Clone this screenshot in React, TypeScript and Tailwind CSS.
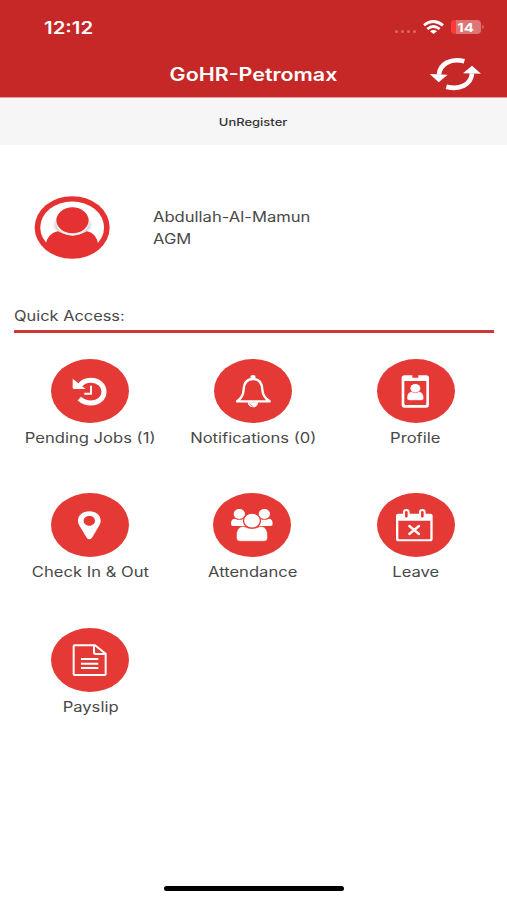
import type { ReactNode } from 'react';

interface Shortcut {
  label: string;
  viewBox: string;
  cx: number;
  cy: number;
  icon: ReactNode;
}

const shortcuts: Shortcut[] = [
  {
    label: 'Pending Jobs (1)',
    viewBox: '65 26 234 192',
    cx: 182,
    cy: 122,
    icon: (
      <>
        <path d="M151 106C160 93 173 90 185 90c23 0 39 15 39 34s-16 34-39 34c-14 0-26-5-35-13" fill="none" stroke="#fff" strokeWidth="15" />
        <path d="M130 85l39 31h-35q-4 0-4-4z" fill="#fff" />
        <path d="M185 106v24h-20" fill="none" stroke="#fff" strokeWidth="6" />
      </>
    ),
  },
  {
    label: 'Notifications (0)',
    viewBox: '42 26 234 192',
    cx: 159,
    cy: 122,
    icon: (
      <>
        <path d="M111 153c14-9 19-18 20-35 1-21 11-32 28-32s27 11 28 32c1 17 7 26 22 35z" fill="none" stroke="#fff" strokeWidth="7" strokeLinejoin="round" />
        <ellipse cx="159" cy="80" rx="8" ry="6" fill="#fff" />
        <path d="M143 156h32c-2 20-30 20-32 0z" fill="#fff" />
        <path d="M149 160c2 5 6 7 10 8" fill="none" stroke="#e53935" strokeWidth="2" />
      </>
    ),
  },
  {
    label: 'Profile',
    viewBox: '51 26 234 192',
    cx: 168,
    cy: 122,
    icon: (
      <>
        <path fillRule="evenodd" fill="#fff" d="M134 75h23v7h18v-7h23q9 0 9 8v80q0 9-9 9h-64q-9 0-9-9V83q0-8 9-8zM133 92v68q0 4 4 4h58q4 0 4-4V92z" />
        <ellipse cx="166" cy="114" rx="15" ry="13" fill="#fff" />
        <path d="M141 144c0-13 6-20 14-20q11 7 22 0c8 0 14 7 14 20q0 6-7 6h-36q-7 0-7-6z" fill="#fff" stroke="#e53935" strokeWidth="1" />
      </>
    ),
  },
  {
    label: 'Check In & Out',
    viewBox: '65 24 234 192',
    cx: 182,
    cy: 120,
    icon: (
      <path fillRule="evenodd" fill="#fff" d="M180 79c20 0 34 12 34 28 0 8-4 14-8 21l-18 30q-8 9-16 0l-18-30c-4-7-8-13-8-21 0-16 14-28 34-28zm0 14c-10 0-17 6-17 14s7 15 17 15 17-7 17-15-7-14-17-14z" />
    ),
  },
  {
    label: 'Attendance',
    viewBox: '41 24 234 192',
    cx: 155,
    cy: 120,
    icon: (
      <>
        <g fill="#fff">
          <ellipse cx="117" cy="87" rx="17" ry="15" />
          <ellipse cx="192" cy="87" rx="17" ry="15" />
          <path d="M92 116q0-15 12-15 13 7 26 0l8 22H98q-6 0-6-7zM217 116q0-15-12-15-13 7-26 0l-7 22h39q6 0 6-7z" />
        </g>
        <path d="M108 156c0-21 7-32 22-32q25 12 50 0c15 0 22 11 22 32q0 13-11 13h-72q-11 0-11-13z" fill="#fff" stroke="#e53935" strokeWidth="2" />
        <ellipse cx="155" cy="107" rx="25.5" ry="22.5" fill="#fff" stroke="#e53935" strokeWidth="4" />
      </>
    ),
  },
  {
    label: 'Leave',
    viewBox: '51 24 234 192',
    cx: 168,
    cy: 120,
    icon: (
      <>
        <path fillRule="evenodd" fill="#fff" d="M116 86h94q8 0 8 7v68q0 8-8 8h-94q-8 0-8-8V93q0-7 8-7zM115 107v53q0 3 3 3h90q3 0 3-3v-53z" />
        <g fill="#e53935" stroke="#fff" strokeWidth="6">
          <rect x="132" y="75" width="14" height="26" rx="7" />
          <rect x="180" y="75" width="14" height="26" rx="7" />
        </g>
        <path d="M148 123l29 24M177 123l-29 24" stroke="#fff" strokeWidth="7" strokeLinecap="round" />
      </>
    ),
  },
  {
    label: 'Payslip',
    viewBox: '65 22 234 192',
    cx: 182,
    cy: 118,
    icon: (
      <g fill="none" stroke="#fff" strokeWidth="6" strokeLinejoin="round">
        <path d="M136 74h61l32 25v61q0 3-3 3h-90q-3 0-3-3V77q0-3 3-3z" />
        <path d="M194 75v20q0 5 5 5h30" />
        <path d="M155 115h52M155 129h52M155 142h52" />
      </g>
    ),
  },
];

function StatusBar() {
  return (
    <div className="flex h-[54px] items-center justify-between pl-11 pr-[23px]">
      <span className="origin-left scale-x-[1.2] pt-0.5 text-[17px] font-semibold leading-none">12:12</span>
      <div className="flex items-center">
        <div className="mr-[7px] mt-2 flex gap-[3px]">
          {[0, 1, 2, 3].map((dot) => (
            <span key={dot} className="h-[3px] w-[3px] rounded-full bg-[#d96a6a]" />
          ))}
        </div>
        <svg className="mr-[7px] h-[14px] w-[21px]" viewBox="0 0 63 42" fill="none" stroke="#fff" strokeWidth="8">
          <path d="M3 16Q31-7 60 16" />
          <path d="M13 27q18-15 37 0" />
          <path d="M21 34q10-8 21 0l-10.500 8z" fill="#fff" stroke="none" />
        </svg>
        <div className="flex h-[14px] w-[30px] items-center justify-center overflow-hidden rounded-[4px] bg-[linear-gradient(to_right,#ff3b38_5px,#dc7676_5px)]">
          <span className="scale-x-[1.25] pt-px text-[12px] font-bold leading-[14px]">14</span>
        </div>
        <span className="ml-px h-1 w-[2px] rounded-r-full bg-[#d46060]" />
      </div>
    </div>
  );
}

function RefreshIcon() {
  return (
    <svg className="mb-0.5 h-[34px] w-[53px]" viewBox="146 171 159 102">
      <g fill="none" stroke="#fff" strokeWidth="14">
        <path d="M252 184c-40-11-74 8-76 40" />
        <path d="M198 260c40 11 74-6 77-40" />
      </g>
      <path d="M148 222l54 2-27 23zM302 221l-54-1 27-23z" fill="#fff" />
    </svg>
  );
}

function Avatar() {
  return (
    <svg className="h-[63px] w-[76px]" viewBox="41 50 231 189" preserveAspectRatio="none">
      <defs>
        <radialGradient id="shade">
          <stop offset="0.6" stopColor="#8a8a8a" />
          <stop offset="1" stopColor="#fff" stopOpacity="0" />
        </radialGradient>
        <clipPath id="face">
          <ellipse cx="157" cy="144.500" rx="100" ry="82" />
        </clipPath>
      </defs>
      <ellipse cx="157" cy="144.500" rx="114" ry="94" fill="#e53131" />
      <ellipse cx="157" cy="144.500" rx="97" ry="78" fill="#fff" />
      <g clipPath="url(#face)">
        <ellipse cx="158" cy="137" rx="66" ry="38" fill="url(#shade)" />
        <path d="M76 240v-42c4-24 17-38 38-42q44 24 88 0c20 4 31 18 35 42v42z" fill="#e53131" />
        <ellipse cx="158" cy="127" rx="51" ry="42" fill="#eee" />
        <ellipse cx="158" cy="123" rx="49" ry="39" fill="#e53131" />
      </g>
    </svg>
  );
}

export default function App() {
  return (
    <div className="flex h-[900px] w-[507px] flex-col overflow-hidden bg-white font-['Inter',sans-serif] text-[#484848]">
      {/* Header */}
      <header className="h-[98px] shrink-0 border-b border-[#e79c9c] bg-[#c62828] text-white">
        <StatusBar />
        <div className="grid h-[42px] grid-cols-[1fr_auto_1fr] items-center pr-[25px]">
          <h1 className="col-start-2 ml-[25px] scale-x-[1.19] whitespace-nowrap text-[18px] font-semibold leading-none">GoHR-Petromax</h1>
          <div className="flex justify-end">
            <RefreshIcon />
          </div>
        </div>
      </header>

      <button className="flex h-[47px] shrink-0 items-center justify-center bg-[#f6f6f6] text-[11px] font-medium text-[#333]">
        <span className="scale-x-[1.18] pt-px">UnRegister</span>
      </button>

      {/* Employee */}
      <section className="mt-[51px] flex h-[63px] items-center pl-[34px]">
        <Avatar />
        <div className="ml-[43px] origin-left scale-x-[1.185] text-[14px] leading-[22px]">
          <p>Abdullah-Al-Mamun</p>
          <p>AGM</p>
        </div>
      </section>

      <div className="ml-[14px] mr-[13px] mt-11 h-[30px] border-b-[3px] border-[#cb3837]">
        <h2 className="inline-block origin-left scale-x-[1.17] text-[14px] leading-[22px]">Quick Access:</h2>
      </div>

      {/* Shortcuts */}
      <main className="mt-[26px] grid auto-rows-[134.300px] grid-cols-3 pl-[9px] pr-[10px]">
        {shortcuts.map((item) => (
          <button key={item.label} className="flex flex-col items-center">
            <svg className="h-[64px] w-[78px] overflow-visible" viewBox={item.viewBox}>
              <ellipse cx={item.cx} cy={item.cy} rx="117" ry="96" fill="#e53935" />
              {item.icon}
            </svg>
            <span className="mt-1 scale-x-[1.185] whitespace-nowrap text-[14px] leading-[22px]">{item.label}</span>
          </button>
        ))}
      </main>

      <div className="mb-[9px] mt-auto h-[5px] w-[180px] shrink-0 self-center rounded-full bg-black" />
    </div>
  );
}
